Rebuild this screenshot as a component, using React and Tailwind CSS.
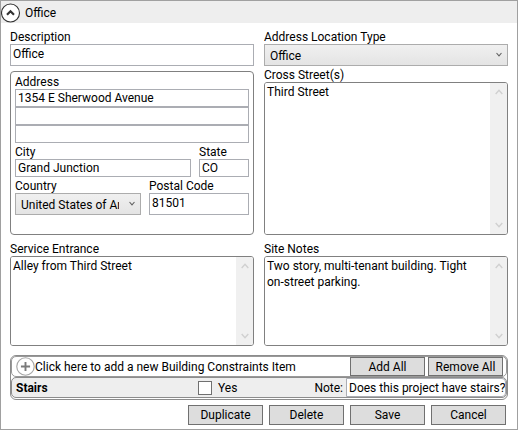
import { useState } from 'react';

const COUNTRIES = ['United States of America', 'Canada', 'Mexico'];
const LOCATION_TYPES = ['Office', 'Warehouse', 'Residence'];

const FIELD = 'block w-full min-w-0 border border-[#abadb3] bg-white px-[2px]';
const BUTTON = 'border border-[#707070] bg-[#dddddd] text-center hover:bg-[#bee6fd]';

function Chevron({ up, className }) {
  return (
    <svg viewBox="0 0 8 6" fill="none" stroke="currentColor" strokeWidth="1.4" className={className} aria-hidden="true">
      <path d={up ? 'M0.7 5 L4 1.2 L7.3 5' : 'M0.7 1 L4 4.8 L7.3 1'} />
    </svg>
  );
}

function Label({ htmlFor, children }) {
  return (
    <label htmlFor={htmlFor} className="block h-4 leading-[18px] whitespace-nowrap">
      {children}
    </label>
  );
}

function Select({ id, options }) {
  return (
    <div className="relative">
      <select
        id={id}
        className="block h-[22px] w-full appearance-none border border-[#acacac] bg-linear-to-b from-[#f0f0f0] to-[#e4e4e4] pt-[2px] pr-[21px] pl-[5px]"
      >
        {options.map((option) => (
          <option key={option}>{option}</option>
        ))}
      </select>
      <Chevron className="pointer-events-none absolute top-2 right-[6px] h-[5px] w-[6px] text-[#606060]" />
    </div>
  );
}

function NotesBox({ id, label, value, className }) {
  return (
    <div className={`flex flex-col ${className}`}>
      <Label htmlFor={id}>{label}</Label>
      <div className="flex flex-1 overflow-hidden rounded-[3px] border border-[#808080]">
        <textarea
          id={id}
          defaultValue={value}
          className="min-w-0 flex-1 resize-none overflow-hidden bg-white pt-[1px] pr-2 pl-[2px] leading-4 outline-none"
        />
        <div className="flex w-[17px] flex-col items-center justify-between bg-[#f0f0f0] py-[6px] text-[#d0d0d0]">
          <Chevron up className="h-[6px] w-2" />
          <Chevron className="h-[6px] w-2" />
        </div>
      </div>
    </div>
  );
}

function AddressGroup() {
  return (
    <fieldset className="mt-[5px] h-[164px] rounded-[4px] border border-[#808080] px-1 pt-[1px]">
      <Label htmlFor="address1">Address</Label>
      <input id="address1" defaultValue="1354 E Sherwood Avenue" className={`${FIELD} h-[18px]`} />
      <input aria-label="Address line 2" className={`${FIELD} h-[18px]`} />
      <input aria-label="Address line 3" className={`${FIELD} h-[18px]`} />
      <div className="flex gap-2">
        <div className="min-w-0 flex-1">
          <Label htmlFor="city">City</Label>
          <input id="city" defaultValue="Grand Junction" className={`${FIELD} h-[18px]`} />
        </div>
        <div className="w-[50px]">
          <Label htmlFor="state">State</Label>
          <input id="state" defaultValue="CO" className={`${FIELD} h-[18px]`} />
        </div>
      </div>
      <div className="flex gap-2">
        <div className="min-w-0 flex-1">
          <Label htmlFor="country">Country</Label>
          <Select id="country" options={COUNTRIES} />
        </div>
        <div className="w-[100px]">
          <Label htmlFor="postal">Postal Code</Label>
          <input id="postal" defaultValue="81501" className={`${FIELD} h-[22px] pb-[2px]`} />
        </div>
      </div>
    </fieldset>
  );
}

function Constraints() {
  return (
    <section className="mt-[9px] rounded-[6px] border border-[#8c8c8c] bg-white pb-[1px]">
      <div className="flex h-[21px] items-center rounded-[5px] border border-[#999999] pr-[3px]">
        <button type="button" className="flex min-w-0 flex-1 items-center text-left whitespace-nowrap">
          <svg viewBox="0 0 20 20" fill="none" className="ml-1 h-[19px] w-[19px] shrink-0" aria-hidden="true">
            <circle cx="10" cy="10" r="9.2" stroke="#a6a6a6" strokeWidth="1.2" />
            <path d="M10 5.2 V14.8 M5.2 10 H14.8" stroke="#7a7a7a" strokeWidth="2" />
          </svg>
          Click here to add a new Building Constraints Item
        </button>
        <div className="flex gap-[3px]">
          <button type="button" className={`${BUTTON} h-[19px] w-[75px]`}>Add All</button>
          <button type="button" className={`${BUTTON} h-[19px] w-[75px]`}>Remove All</button>
        </div>
      </div>
      <div className="flex h-[21px] items-center rounded-[5px] border border-[#8c8c8c] bg-[#eeeeee]">
        <span className="w-[186px] pl-[4px] font-bold">Stairs</span>
        <label className="flex items-center gap-[6px]">
          <input type="checkbox" className="size-[14px] appearance-none border border-[#707070] bg-white checked:bg-[#707070]" />
          Yes
        </label>
        <label htmlFor="note" className="ml-auto pr-[3px]">Note:</label>
        <input
          id="note"
          defaultValue="Does this project have stairs?"
          className="h-[19px] w-[160px] rounded-r-[4px] border border-[#abadb3] bg-white pl-[2px]"
        />
      </div>
    </section>
  );
}

export default function App() {
  const [open, setOpen] = useState(true);

  return (
    <main className="border border-[#a0a0a0] bg-white font-[Roboto,'Segoe_UI',sans-serif] text-[12px] leading-4 text-black">
      <header className="flex h-[22px] items-center gap-1 bg-[#eeeeee] pt-[1px]">
        <button type="button" aria-label="Toggle Office" aria-expanded={open} onClick={() => setOpen(!open)}>
          <svg viewBox="0 0 20 20" fill="none" className="block size-5" aria-hidden="true">
            <circle cx="9.5" cy="10" r="9" fill="#fff" stroke="#333" strokeWidth="1.1" />
            <path d={open ? 'M6 11.8 L9.5 8.3 L13 11.8' : 'M6 8.3 L9.5 11.8 L13 8.3'} stroke="#333" strokeWidth="2.2" />
          </svg>
        </button>
        <h1>Office</h1>
      </header>

      {open && (
        <form className="px-[9px] pt-[5px] pb-1" onSubmit={(e) => e.preventDefault()}>
          <div className="grid grid-cols-2 gap-x-[10px]">
            <div>
              <Label htmlFor="description">Description</Label>
              <input id="description" defaultValue="Office" className={`${FIELD} h-[22px] pb-[2px]`} />
              <AddressGroup />
            </div>
            <div className="flex flex-col">
              <Label htmlFor="locationType">Address Location Type</Label>
              <Select id="locationType" options={LOCATION_TYPES} />
              <NotesBox id="crossStreets" label="Cross Street(s)" value="Third Street" className="flex-1" />
            </div>
            <NotesBox id="entrance" label="Service Entrance" value="Alley from Third Street" className="mt-[5px] h-[106px]" />
            <NotesBox
              id="siteNotes"
              label="Site Notes"
              value="Two story, multi-tenant building. Tight on-street parking."
              className="mt-[5px] h-[106px]"
            />
          </div>

          <Constraints />

          <div className="mt-[5px] flex justify-end gap-[6px] pr-[2px]">
            {['Duplicate', 'Delete', 'Save', 'Cancel'].map((name) => (
              <button key={name} type="button" className={`${BUTTON} h-5 w-[75px]`}>
                {name}
              </button>
            ))}
          </div>
        </form>
      )}
    </main>
  );
}
